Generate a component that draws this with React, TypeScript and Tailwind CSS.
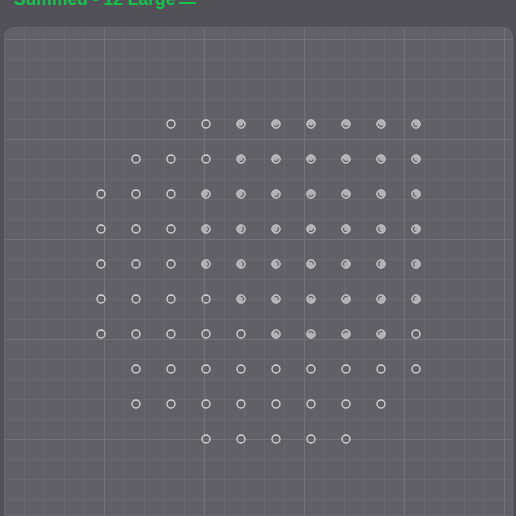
import React from "react";

// one string per row, 10 columns: "." nothing, "o" open ring, "x" filled dot
const ROWS = [
  "..ooxxxxxx",
  ".oooxxxxxx",
  "oooxxxxxxx",
  "oooxxxxxxx",
  "oooxxxxxxx",
  "ooooxxxxxx",
  "oooooxxxxo",
  ".ooooooooo",
  ".oooooooo.",
  "...ooooo..",
];

function Dot({ kind, row, col }: { kind: string; row: number; col: number }) {
  if (kind === ".") return <div className="h-[35px] w-[35px]" />;

  // the dark arc leans toward the middle of the filled block
  const x = 101 + col * 35;
  const y = 124 + row * 35;
  const angle = (Math.atan2(250 - y, 320 - x) * 180) / Math.PI;

  return (
    <div className="flex h-[35px] w-[35px] items-center justify-center">
      <svg width="12" height="12" viewBox="0 0 12 12">
        {kind === "o" ? (
          <circle cx="6" cy="6" r="4" fill="none" stroke="#d9d9db" strokeWidth="1.3" />
        ) : (
          <>
            <circle cx="6" cy="6" r="4.3" fill="#b1b0b4" stroke="#c9c9cc" strokeWidth="1" />
            <path
              d="M7.25 3.83 A2.5 2.5 0 0 1 7.25 8.17"
              fill="none"
              stroke="#57565c"
              strokeWidth="1.1"
              strokeLinecap="round"
              transform={`rotate(${angle} 6 6)`}
            />
          </>
        )}
      </svg>
    </div>
  );
}

export default function App() {
  return (
    <div className="flex h-screen w-full flex-col overflow-hidden bg-[#525157] font-['Liberation_Sans',Arial,sans-serif]">
      {/* Title, mostly scrolled off the top */}
      <div className="mt-[-9px] flex h-[17.5px] items-end pl-[14px] text-[17.5px] leading-[17.5px] font-bold text-[#12c24c]">
        <span>Summed - 12 Large</span>
        <span className="mb-[4.5px] ml-[4px] inline-block h-[2px] w-[17px] bg-[#12c24c]" />
      </div>

      {/* Canvas */}
      <div className="ml-[4px] mr-[3px] mt-[18.5px] flex-1 rounded-t-[10px] bg-[#606066] bg-[linear-gradient(to_right,#727277_1px,transparent_1px),linear-gradient(to_bottom,#727277_1px,transparent_1px),linear-gradient(to_right,#69696f_1px,transparent_1px),linear-gradient(to_bottom,#69696f_1px,transparent_1px)] bg-[size:100px_100px,100px_100px,20px_20px,20px_20px] bg-[position:0_12px] shadow-[inset_0_0_0_1px_#69696f]">
        <div className="grid grid-cols-[repeat(10,35px)] pl-[79px] pt-[79px]">
          {ROWS.map((line, r) =>
            line.split("").map((kind, c) => <Dot key={`${r}-${c}`} kind={kind} row={r} col={c} />)
          )}
        </div>
      </div>
    </div>
  );
}
